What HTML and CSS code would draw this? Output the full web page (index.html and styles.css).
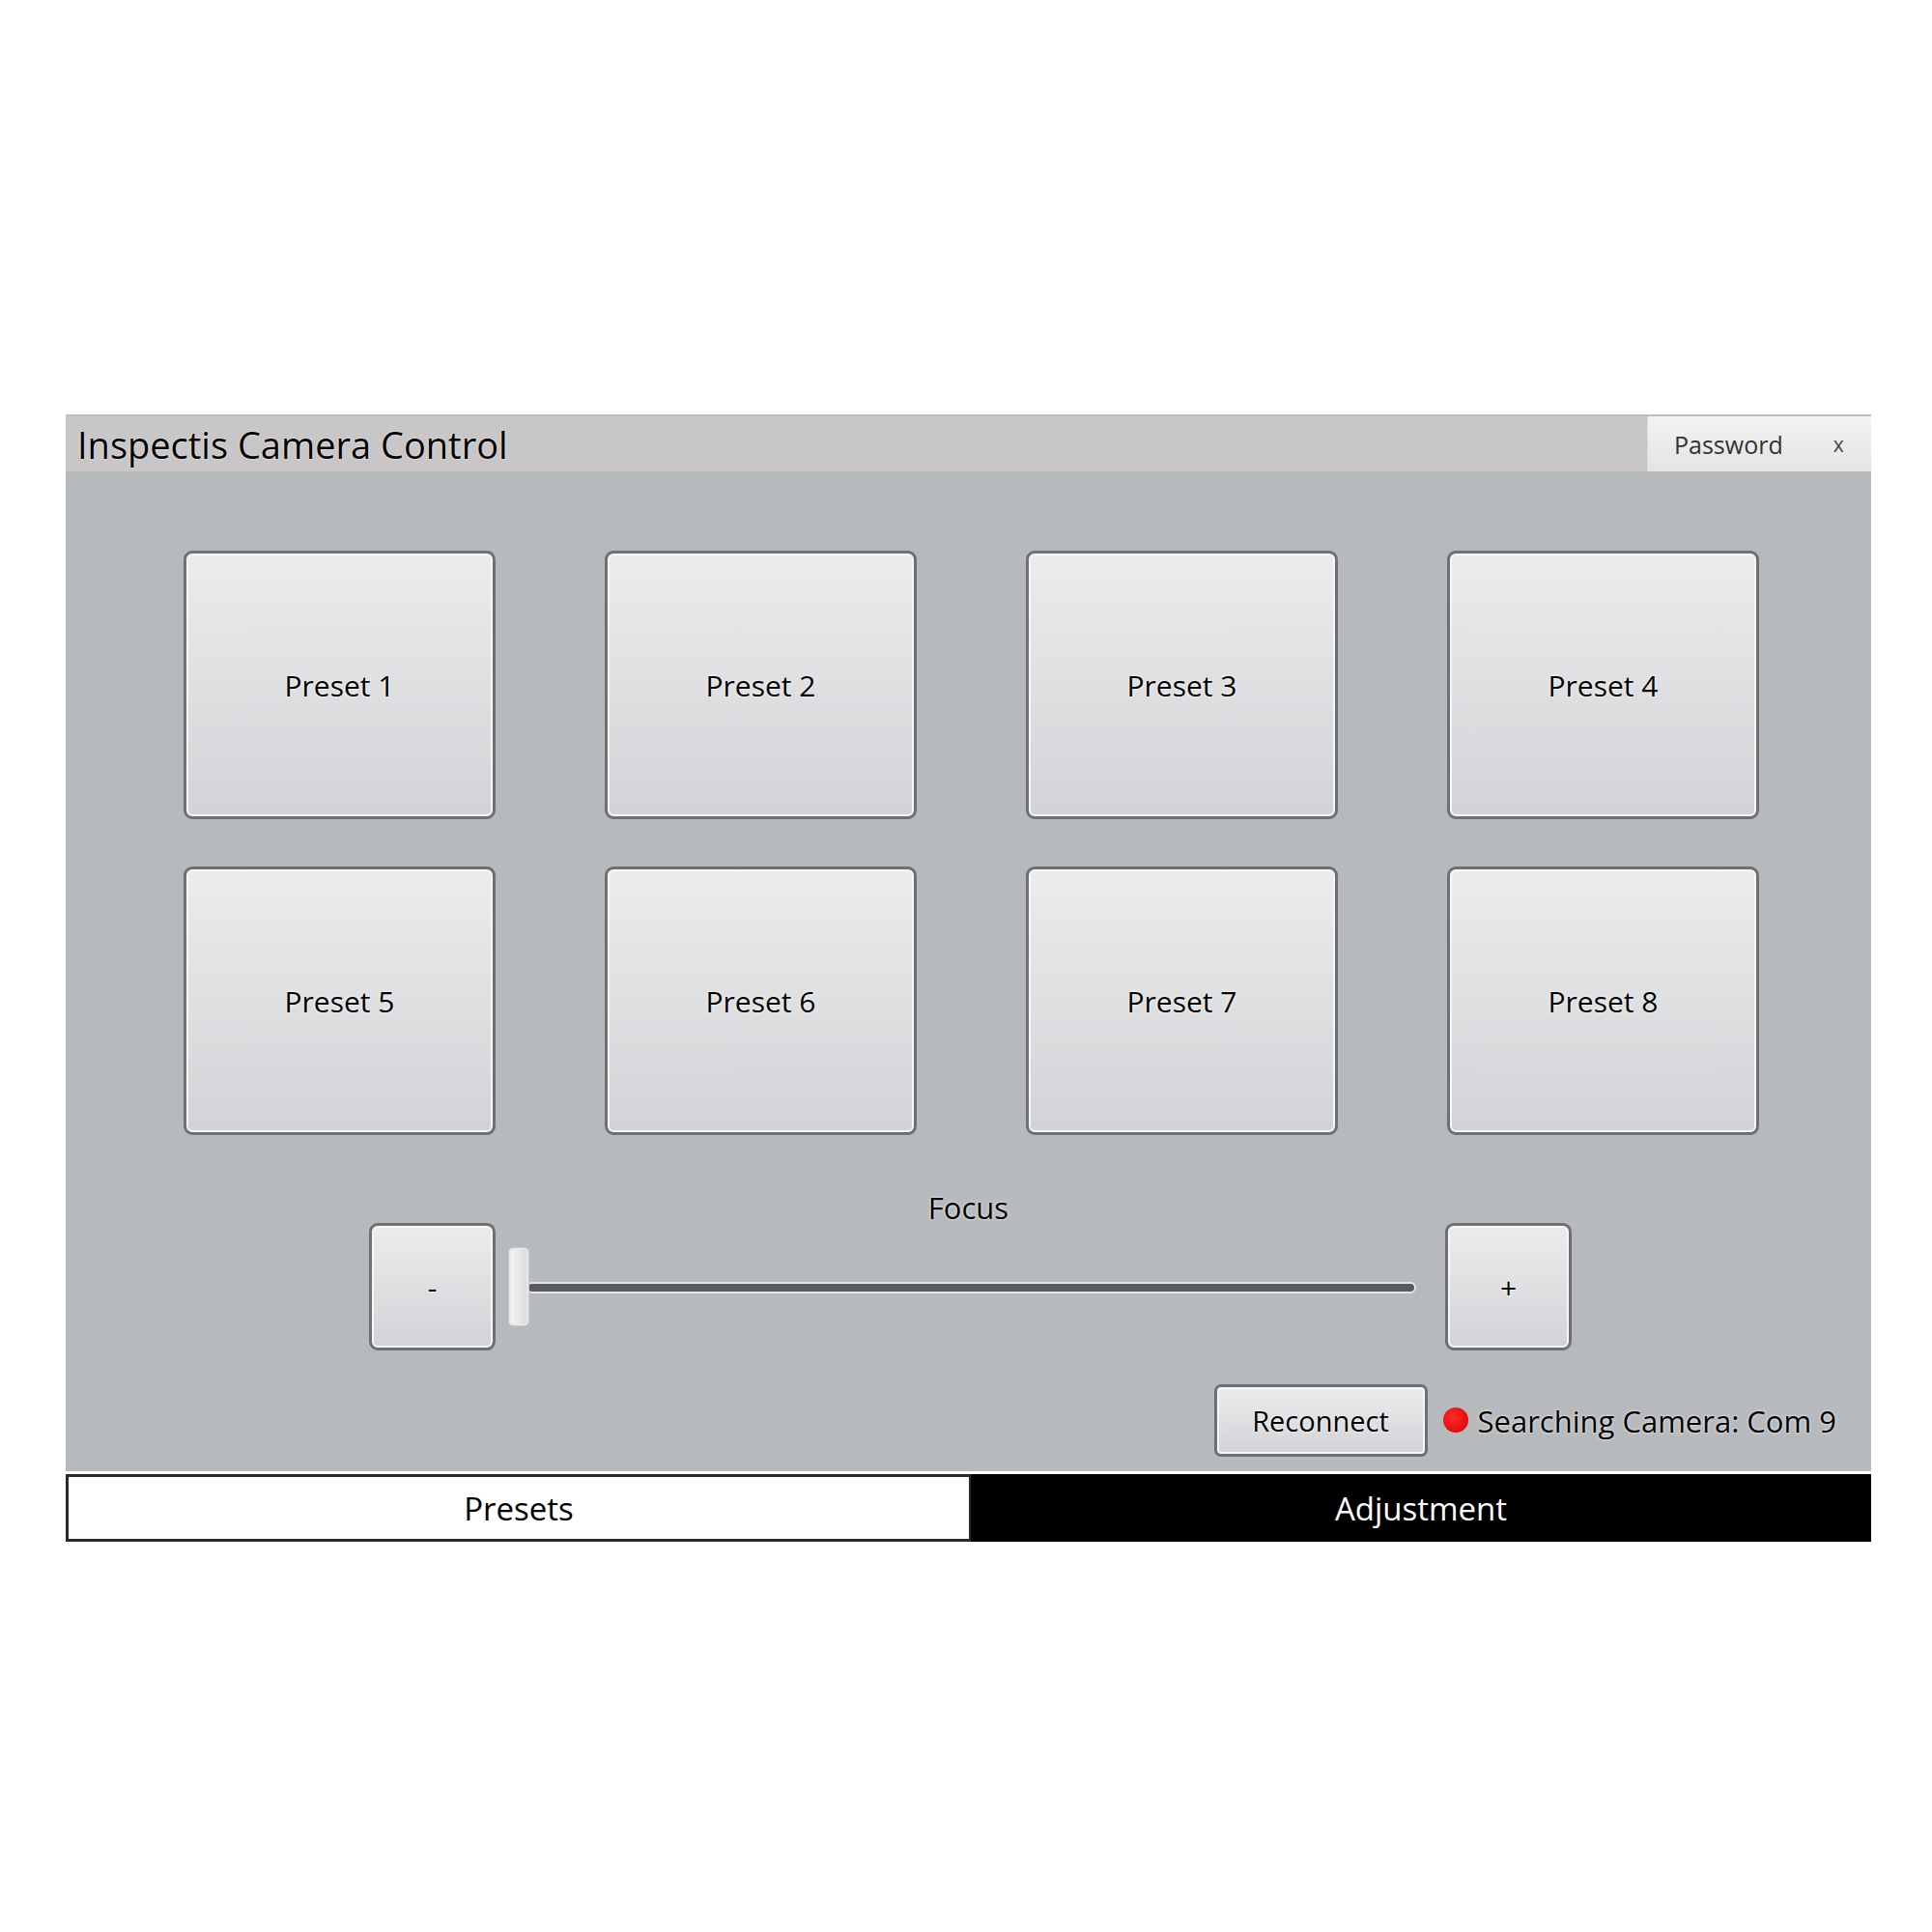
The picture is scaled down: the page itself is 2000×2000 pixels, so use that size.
FILE: index.html
```html
<!DOCTYPE html>
<html lang="en">
<head>
    <meta charset="UTF-8">
    <title>Inspectis Camera Control</title>
    <link rel="stylesheet" href="styles.css">
</head>
<body>
    <div class="window">
        <div class="titlebar">
            <div class="title">Inspectis Camera Control</div>
            <div class="password-box">
                <span class="password">Password</span>
                <span class="close">x</span>
            </div>
        </div>

        <div class="content">
            <div class="presets">
                <button class="preset">Preset 1</button>
                <button class="preset">Preset 2</button>
                <button class="preset">Preset 3</button>
                <button class="preset">Preset 4</button>
                <button class="preset">Preset 5</button>
                <button class="preset">Preset 6</button>
                <button class="preset">Preset 7</button>
                <button class="preset">Preset 8</button>
            </div>

            <div class="focus-label">Focus</div>
            <div class="focus-row">
                <button class="step-btn minus">-</button>
                <div class="slider">
                    <div class="track"></div>
                    <div class="thumb"></div>
                </div>
                <button class="step-btn plus">+</button>
            </div>

            <div class="status-row">
                <button class="reconnect">Reconnect</button>
                <span class="dot"></span>
                <span class="status">Searching Camera: Com 9</span>
            </div>
        </div>

        <div class="tabs">
            <div class="tab active">Presets</div>
            <div class="tab dark">Adjustment</div>
        </div>
    </div>
</body>
</html>
```

FILE: styles.css
```css
body {
    margin: 0;
    background: #fff;
    font-family: 'Open Sans', 'Noto Sans', sans-serif;
    color: #000;
}

.window {
    width: 1869px;
    margin: 429px 0 0 68px;
}

.titlebar {
    height: 59px;
    display: flex;
    align-items: center;
    background: #c8c6c7;
    border-top: 2px solid #bdbdbd;
    box-sizing: border-box;
}

.title {
    flex: 1;
    padding-left: 12px;
    font-size: 38px;
    text-shadow: 0 0 2px #fff;
}

.password-box {
    width: 232px;
    height: 100%;
    display: flex;
    align-items: center;
    background: linear-gradient(#f3f3f3, #e4e4e4);
    border-left: 1px solid #d8d8d8;
    box-sizing: border-box;
}

.password {
    margin-left: 27px;
    font-size: 25px;
    color: #333;
}

.close {
    margin-left: 52px;
    font-size: 21px;
    color: #444;
}

.content {
    height: 1035px;
    box-sizing: border-box;
    padding: 82px 0 15px;
    background: #b6babd;
    display: flex;
    flex-direction: column;
}

.presets {
    display: grid;
    grid-template-columns: repeat(4, 323px);
    grid-auto-rows: 278px;
    column-gap: 113px;
    row-gap: 49px;
    justify-content: center;
    padding-left: 6px;
}

.preset,
.step-btn,
.reconnect {
    font-family: 'Open Sans', 'Noto Sans', sans-serif;
    color: #000;
    background: linear-gradient(#ececee, #d2d3d6);
    border: 3px solid #6e7072;
    border-radius: 9px;
    box-shadow: inset 0 0 0 2px #f7f7f7;
    padding: 0;
    text-shadow: 0 0 3px #fff;
}

.preset {
    font-size: 30px;
}

.focus-label {
    margin-top: 59px;
    height: 32px;
    line-height: 32px;
    text-align: center;
    font-size: 31px;
    text-shadow: 0 0 3px #fff;
}

.focus-row {
    height: 132px;
    display: flex;
    align-items: center;
    justify-content: center;
    padding-left: 4px;
}

.step-btn {
    width: 131px;
    height: 132px;
    font-size: 30px;
}

.slider {
    position: relative;
    width: 939px;
    height: 80px;
    margin: 0 30px 0 14px;
}

.track {
    position: absolute;
    left: 18px;
    right: 0;
    top: 35px;
    height: 8px;
    background: #595b5e;
    border: 2px solid #e3e5e7;
    border-radius: 6px;
}

.thumb {
    position: absolute;
    left: 0;
    top: 0;
    width: 20px;
    height: 80px;
    box-sizing: border-box;
    background: linear-gradient(90deg, #f4f4f4, #dcdde0);
    border: 2px solid #e8e8ea;
    border-radius: 4px;
    box-shadow: 0 0 0 1px #c6c8cb;
}

.status-row {
    margin-top: 35px;
    height: 75px;
    display: flex;
    align-items: center;
    justify-content: flex-end;
    padding-right: 36px;
}

.reconnect {
    width: 221px;
    height: 75px;
    font-size: 29px;
    border-width: 3px;
    border-radius: 7px;
}

.dot {
    width: 26px;
    height: 26px;
    margin: 0 10px 2px 16px;
    border-radius: 50%;
    background: radial-gradient(circle at 40% 40%, #ff2a2a, #d80000);
}

.status {
    font-size: 31px;
    text-shadow: 0 0 3px #fff;
}

.tabs {
    display: flex;
    padding-top: 3px;
    background: #fff;
}

.tab {
    flex: 1;
    height: 70px;
    box-sizing: border-box;
    display: flex;
    align-items: center;
    justify-content: center;
    font-size: 33px;
}

.tab.active {
    background: #fff;
    border: 3px solid #2a2a2a;
    border-right-width: 2px;
}

.tab.dark {
    background: #000;
    color: #fff;
}
```
